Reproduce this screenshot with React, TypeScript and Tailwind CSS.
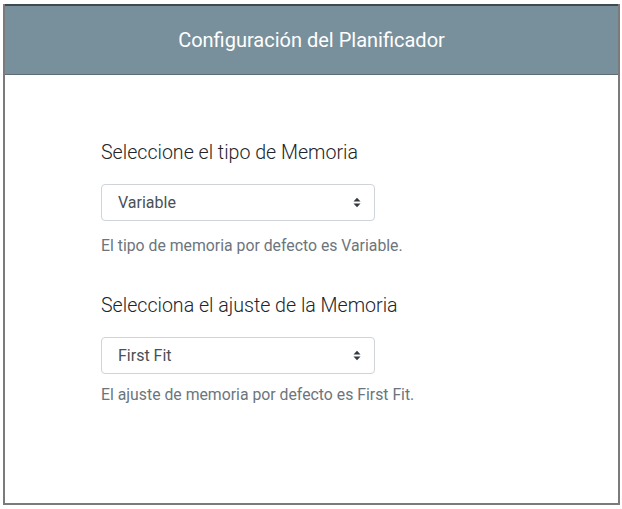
import React from "react";

function Arrows() {
  return (
    <svg width="8" height="11" viewBox="0 0 8 11" className="shrink-0">
      <path d="M0.5 4.5 L4 0.8 L7.5 4.5 Z" fill="#343a40" />
      <path d="M0.5 6.5 L4 10.2 L7.5 6.5 Z" fill="#343a40" />
    </svg>
  );
}

function Field({ label, value, help, top, helpTop }: { label: string; value: string; help: string; top: string; helpTop: string }) {
  return (
    <div className={top}>
      <div className="text-[19.6px] leading-[24px] font-light text-[#212529]">{label}</div>
      <div className="mt-[19px] w-[274px] h-[37px] border border-[#ced4da] rounded-[4px] bg-white flex items-center justify-between pl-[16px] pr-[13px]">
        <span className="text-[16px] text-[#495057]">{value}</span>
        <Arrows />
      </div>
      <div className={`${helpTop} text-[15.8px] leading-[24px] text-[#6c757d]`}>{help}</div>
    </div>
  );
}

export default function App() {
  return (
    <div className="w-[622px] h-[509px] bg-white" style={{ fontFamily: "Roboto, 'Liberation Sans', sans-serif" }}>
      <div className="ml-[3px] pt-[4px]">
        <div className="w-[617px] h-[501px] border-2 border-t-0 border-[#7b7b7b] flex flex-col">
          <div className="h-[71px] bg-[#78909c] border-t-2 border-t-[#3d4a52] border-b border-b-[#5d6e77] flex items-center justify-center">
            <span className="text-[20px] text-white">Configuración del Planificador</span>
          </div>
          <div className="pl-[96px]">
            <Field top="mt-[66px]" helpTop="mt-[13px]" label="Seleccione el tipo de Memoria" value="Variable" help="El tipo de memoria por defecto es Variable." />
            <Field top="mt-[36px]" helpTop="mt-[9px]" label="Selecciona el ajuste de la Memoria" value="First Fit" help="El ajuste de memoria por defecto es First Fit." />
          </div>
        </div>
      </div>
    </div>
  );
}
